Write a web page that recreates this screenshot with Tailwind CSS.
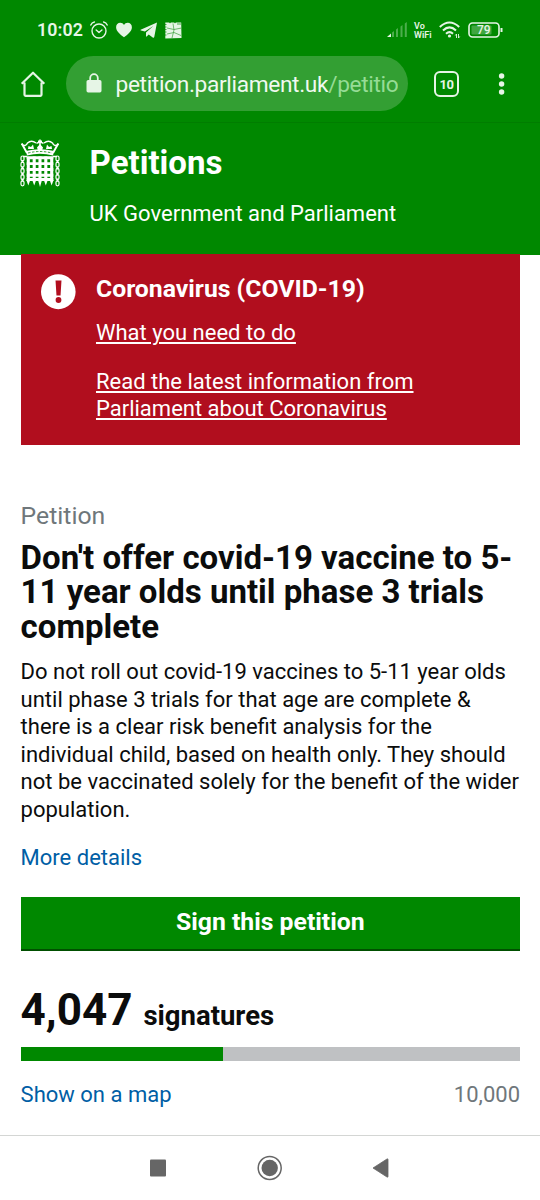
<!DOCTYPE html>
<html lang="en">
<head>
<meta charset="utf-8">
<meta name="viewport" content="width=device-width">
<title>Petitions</title>
<script src="https://cdn.jsdelivr.net/npm/@tailwindcss/browser@4"></script>
</head>
<body class="w-[540px] h-[1200px] overflow-hidden bg-white font-[Roboto,sans-serif] text-[22px] leading-[27.5px] text-[#0b0c0c]">
<div class="flex flex-col h-[1200px]">
  <div class="h-[56px] shrink-0 bg-[#008800] flex items-center pl-[37px] pr-[37px] pt-[4px] text-[#e6f5e6]">
    <span class="w-[53px] text-[17.800px] font-semibold tracking-[0.1px] leading-none whitespace-nowrap">10:02</span>
    <svg class="w-[19px] h-[19px]" viewBox="0 0 19 19" fill="none" stroke="currentColor" stroke-width="1.400" stroke-linecap="round" stroke-linejoin="round"><circle cx="9" cy="10" r="7"/><path d="M6.200 9l2.800 2.500L11.900 9M.8 4q1-2.500 3.600-3M17.200 4q-1-2.500-3.600-3"/></svg>
    <svg class="w-[17px] h-[16px] ml-[7px]" viewBox="0 0 17 16" fill="currentColor"><path d="M8 15.300C4.500 12.500.1 9.300.1 5.200.1 2.400 2 .7 4.200.7c1.700 0 3 .8 3.800 2.200C8.800 1.500 10.100.7 11.800.7c2.200 0 4.100 1.700 4.100 4.500C15.900 9.300 11.500 12.500 8 15.300z"/></svg>
    <svg class="w-[18px] h-[16px] ml-[7px]" viewBox="0 0 18 16" fill="currentColor"><path d="M.6 7.800L17 .6 14.300 14.800c-.2 1-.8 1.200-1.600.7L8.700 12.500l-2 2c-.3.300-.7.200-.7-.5V10.500L13.300 4 4.900 9.500 1 8.500q-.8-.3-.4-.7z"/></svg>
    <svg class="w-[17px] h-[17px] ml-[7px] mr-1" viewBox="0 0 17 17"><path fill="currentColor" d="M.3.500h15.900l.3 15.600-16.200.4z"/><path fill="none" stroke="#3a9f3a" stroke-width=".7" d="M2 6l7 1.500L16.500 6M8 1.500L9 8 7 16M2 12l7-1.500 7 3"/><path stroke="#008800" stroke-width=".7" d="M0 2.500h1.500M0 5h1.500M0 7.500h1.500M0 10h1.500M0 13h1.500M4 .6h2M9 .6h2M12 2h4"/></svg>
    <div class="grow"></div>
    <svg class="w-[21px] h-[16px]" viewBox="0 0 21 16"><path fill="#e6f5e6" d="M0 15l4-3.500V15z"/><path fill="#4cae4c" d="M5 10.500l2-1.500v6H5zM9 7.500L11 6v9H9zM13.500 4.500l2-1.500v12h-2zM17.800 1.500l2-1.500v15h-2z"/></svg>
    <div class="ml-[6px] w-[20px] text-[9px] leading-[8.500px] font-semibold whitespace-nowrap pt-px">Vo<br>WiFi</div>
    <svg class="ml-[5px] w-[22px] h-[18px]" viewBox="0 0 22 18" fill="none" stroke="currentColor" stroke-width="2"><path d="M.8 6Q10.500-3 20.200 6M4 9.500Q10.500 3.300 17 9.500M7 12.800Q10.500 9.500 14 12.800"/><circle cx="10.500" cy="15" r="1.600" fill="currentColor" stroke="none"/><path stroke-width=".9" d="M17.500 17v-4l-1.200 1.500M19.500 13v4l1.200-1.500"/></svg>
    <svg class="ml-[7px] w-[35px] h-[17px]" viewBox="0 0 35 17"><rect x="1" y="1" width="30" height="14" rx="3.500" fill="none" stroke="#e6f5e6" stroke-width="1.600"/><rect x="3.500" y="3.500" width="20" height="9" rx="1" fill="#40a640"/><path fill="#e6f5e6" d="M32.500 6h2v4h-2z"/><text x="15.800" y="12.200" text-anchor="middle" font-size="12" font-weight="500" fill="#e6f5e6">79</text></svg>
  </div>
  <div class="h-[66px] shrink-0 bg-[#008800] flex items-start">
    <svg class="mt-[14px] ml-[20px] w-[26px] h-[28px]" viewBox="0 0 26 28" fill="none" stroke="#e6f5e6" stroke-width="2.200" stroke-linejoin="round"><path d="M1.700 13.700L13 2.700l11.300 11M4.500 12.500v12.300q0 1 1 1h15q1 0 1-1V12.500"/></svg>
    <div class="ml-[20px] w-[342px] h-[55px] rounded-full bg-[#339f33] flex items-center">
      <svg class="ml-[19.500px] mb-[2px] w-[16px] h-[20px]" viewBox="0 0 16 20"><rect x=".5" y="7" width="15" height="12.500" rx="1.700" fill="#e6f5e6"/><path d="M4.200 8V5a3.800 3.800 0 017.600 0v3" fill="none" stroke="#e6f5e6" stroke-width="1.800"/></svg>
      <div class="ml-[14px] mt-[3px] w-[282px] overflow-hidden whitespace-nowrap text-[22.700px] tracking-[-0.340px] leading-[32px] text-[#f0f9f0]">petition.parliament.uk<span class="text-[#96dc96]">/petitio</span></div>
    </div>
    <div class="mt-[15px] ml-[26px] w-[25px] h-[26px] border-[2.200px] border-[#e6f5e6] rounded-[6px] flex items-center justify-center text-[13px] tracking-[-0.500px] font-bold leading-none text-[#e6f5e6]">10</div>
    <svg class="ml-[39px] mt-[15px] w-[8px] h-[26px]" viewBox="0 0 8 26" fill="#e6f5e6"><circle cx="3.600" cy="5" r="2.700"/><circle cx="3.600" cy="13" r="2.700"/><circle cx="3.600" cy="21" r="2.700"/></svg>
  </div>
  <header class="h-[133px] shrink-0 bg-[#008800] border-t border-[#007d00] text-white flex">
    <svg class="ml-[20px] mt-[16px] w-[40px] h-[49px]" viewBox="0 0 40 49" fill="none" stroke="#fff">
      <path fill="#fff" stroke="none" d="M6 12Q20 8.500 34 12L33 16.500Q20 13 7 16.500z"/>
      <path stroke="#008800" stroke-width=".8" stroke-dasharray="2.500 1.500" d="M8 14Q20 11 32 14"/>
      <path stroke-width="1.900" d="M7 14L1.700 4.500M33 14l5.300-9.500"/>
      <path stroke-width="1.500" d="M1.500 5q4 3.500 6-1 4-3.500 8.500 0M38.500 5q-4 3.500-6-1-4-3.500-8.500 0M16.500 4.500q3.500-2.500 7 0M20 .5v8M18 2.200h4"/>
      <path fill="#fff" stroke="none" d="M17 8.500l3-3.500 3 3.500-1 3h-4zM8 10l.5-3 2.500 1 2-2.500 1 4.500zM32 10l-.5-3-2.500 1-2-2.500-1 4.500z"/>
      <path stroke-width="3.100" d="M8.300 18v24M14.200 17.500v24.500M20 17.500V42M25.800 17.500v24.500M31.700 18v24"/>
      <path stroke-width="2.900" d="M6.700 18.700h26.600M6.700 24.600h26.600M6.700 30.500h26.600M6.700 36.300h26.600M6.700 40.500h26.600"/>
      <path fill="#fff" stroke="none" d="M6.400 41h3.900l-2 5.500zM12.200 41h4l-2 5.500zM18 41h4l-2 7zM23.800 41h4l-2 5.500zM29.700 41h3.900l-2 5.500z"/>
      <g stroke-width="1.200"><rect x="1" y="17" width="3" height="5" rx="1.500"/><rect x="1" y="23.200" width="3" height="5" rx="1.500"/><rect x="1" y="29.400" width="3" height="5" rx="1.500"/><rect x="1" y="35.600" width="3" height="5" rx="1.500"/><rect x="1" y="41.800" width="3" height="5" rx="1.500"/><rect x="36" y="17" width="3" height="5" rx="1.500"/><rect x="36" y="23.200" width="3" height="5" rx="1.500"/><rect x="36" y="29.400" width="3" height="5" rx="1.500"/><rect x="36" y="35.600" width="3" height="5" rx="1.500"/><rect x="36" y="41.800" width="3" height="5" rx="1.500"/></g>
      <path stroke-width="1.700" d="M2.500 21v3M2.500 27.500v3M2.500 33.500v3M2.500 39.500v3M37.500 21v3M37.500 27.500v3M37.500 33.500v3M37.500 39.500v3M3 17.500h4M33 17.500h4"/>
    </svg>
    <div class="ml-[29.600px] pt-[20px] whitespace-nowrap">
      <h1 class="text-[33px] leading-[40px] font-bold">Petitions</h1>
      <p class="mt-[17px]">UK Government and Parliament</p>
    </div>
  </header>
  <main class="ml-[20.600px] mr-[20px] flex flex-col">
    <section class="-mt-px h-[191px] bg-[#b10e1e] text-white flex pl-[20.400px]">
      <svg class="mt-[20px] w-[35px] h-[36px]" viewBox="0 0 35 36"><ellipse cx="17.300" cy="17.700" rx="17.300" ry="17.500" fill="#fff"/><path fill="#b10e1e" d="M14.500 6.500h6l-1 15h-4z"/><circle cx="17.500" cy="26" r="2.900" fill="#b10e1e"/></svg>
      <div class="ml-[20px] pt-[20.500px] whitespace-nowrap">
        <h2 class="font-bold text-[24.750px]">Coronavirus (COVID-19)</h2>
        <p class="mt-[17px] underline decoration-[1.500px] underline-offset-[2px]">What you need to do</p>
        <p class="mt-[21px] underline decoration-[1.500px] underline-offset-[2px]">Read the latest information from<br>Parliament about Coronavirus</p>
      </div>
    </section>
    <p class="mt-[56.500px] text-[24.750px] text-[#6f777b]">Petition</p>
    <h1 class="mt-[12px] text-[33px] leading-[34.400px] font-bold whitespace-nowrap">Don't offer covid-19 vaccine to 5-<br>11 year olds until phase 3 trials<br>complete</h1>
    <p class="mt-[14px] whitespace-nowrap">Do not roll out covid-19 vaccines to 5-11 year olds<br>until phase 3 trials for that age are complete &amp;<br>there is a clear risk benefit analysis for the<br>individual child, based on health only. They should<br>not be vaccinated solely for the benefit of the wider<br>population.</p>
    <a class="mt-[20.500px] text-[#005ea5]">More details</a>
    <div class="mt-[26px] h-[53.500px] bg-[#008800] border-b-[2.500px] border-[#004f00] text-white text-[24.750px] font-bold flex items-center justify-center pb-[2px]">Sign this petition</div>
    <div class="mt-[29.500px] h-[60px] flex items-baseline font-bold leading-[60px]"><span class="text-[44px]">4,047</span><span class="ml-[11px] text-[27.500px]">signatures</span></div>
    <div class="mt-[6.500px] h-[14px] bg-[#bfc1c3]"><div class="h-full w-[202px] bg-[#008800]"></div></div>
    <div class="mt-[20px] flex justify-between"><a class="text-[#005ea5]">Show on a map</a><span class="text-[#6f777b]">10,000</span></div>
  </main>
  <nav class="mt-auto h-[65px] shrink-0 border-t border-[#d4d6d4] bg-white">
    <svg class="w-[540px] h-[64px]" viewBox="0 0 540 64" fill="#666"><rect x="150" y="23.500" width="16" height="17" rx="1"/><circle cx="269.700" cy="32" r="8.200"/><circle cx="269.700" cy="32" r="11.500" fill="none" stroke="#666" stroke-width="1.500"/><path d="M373 32l14-9q1-.5 1 .5v17q0 1-1 .5z" stroke="#666" stroke-width=".8"/></svg>
  </nav>
</div>
</body>
</html>
